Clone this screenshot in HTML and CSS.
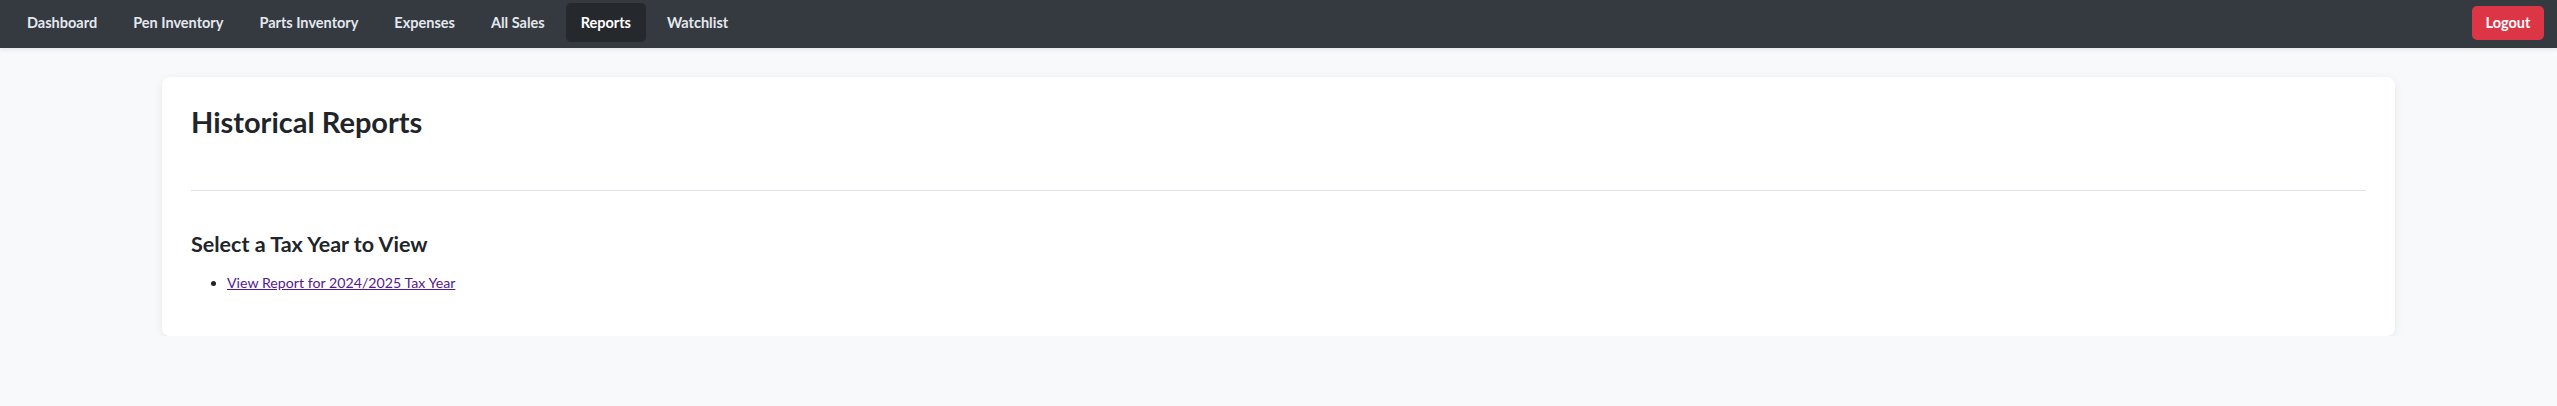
FILE: index.html
```html
<!DOCTYPE html>
<html lang="en">
<head>
<meta charset="utf-8">
<title>Historical Reports</title>
<link rel="stylesheet" href="styles.css">
</head>
<body>
<nav class="navbar">
  <ul class="nav-links">
    <li><a class="nav-link" href="#">Dashboard</a></li>
    <li><a class="nav-link" href="#">Pen Inventory</a></li>
    <li><a class="nav-link" href="#">Parts Inventory</a></li>
    <li><a class="nav-link" href="#">Expenses</a></li>
    <li><a class="nav-link" href="#">All Sales</a></li>
    <li><a class="nav-link active" href="#">Reports</a></li>
    <li><a class="nav-link" href="#">Watchlist</a></li>
  </ul>
  <a class="logout-btn" href="#">Logout</a>
</nav>
<main class="container">
  <section class="card">
    <h1 class="page-title">Historical Reports</h1>
    <hr class="divider">
    <h2 class="section-title">Select a Tax Year to View</h2>
    <ul class="report-list">
      <li><a class="report-link" href="#">View Report for 2024/2025 Tax Year</a></li>
    </ul>
  </section>
</main>
</body>
</html>
```
FILE: styles.css
```css
* { box-sizing: border-box; }
html, body {
  margin: 0;
  padding: 0;
}
body {
  background: #f8f9fa;
  font-family: Lato, "Liberation Sans", sans-serif;
  color: #212529;
}
.navbar {
  display: flex;
  align-items: center;
  justify-content: space-between;
  height: 48px;
  padding: 0 13px 3px 12px;
  background: #343a40;
  box-shadow: 0 2px 4px rgba(0, 0, 0, 0.08);
}
.nav-links {
  display: flex;
  gap: 6px;
  list-style: none;
  margin: 0;
  padding: 0;
}
.nav-link {
  display: flex;
  align-items: center;
  height: 39px;
  padding: 0 15px;
  border-radius: 5px;
  color: #e4e8ee;
  font-size: 14.5px;
  font-weight: 700;
  text-decoration: none;
}
.nav-link.active {
  background: #25282c;
  color: #ffffff;
}
.logout-btn {
  display: flex;
  align-items: center;
  justify-content: center;
  width: 72px;
  height: 34px;
  border-radius: 5px;
  background: #dc3545;
  color: #ffffff;
  font-size: 14.5px;
  font-weight: 700;
  text-decoration: none;
}
.container {
  max-width: 2233px;
  margin: 29px auto 0;
}
.card {
  background: #ffffff;
  border-radius: 8px;
  box-shadow: 0 2px 8px rgba(0, 0, 0, 0.08);
  padding: 28px 29px 42.5px;
}
.page-title {
  margin: 0;
  font-size: 29px;
  line-height: 1.2;
  font-weight: 700;
  color: #212529;
}
.divider {
  border: 0;
  border-top: 1px solid #e0e1e9;
  margin: 50px 0 41.5px;
}
.section-title {
  margin: 0 0 14px;
  font-size: 21.5px;
  line-height: 1.2;
  font-weight: 700;
  color: #212529;
}
.report-list {
  margin: 0;
  padding-left: 36px;
  font-size: 14.2px;
  line-height: 1.5;
}
.report-link {
  color: #551a8b;
}
```
